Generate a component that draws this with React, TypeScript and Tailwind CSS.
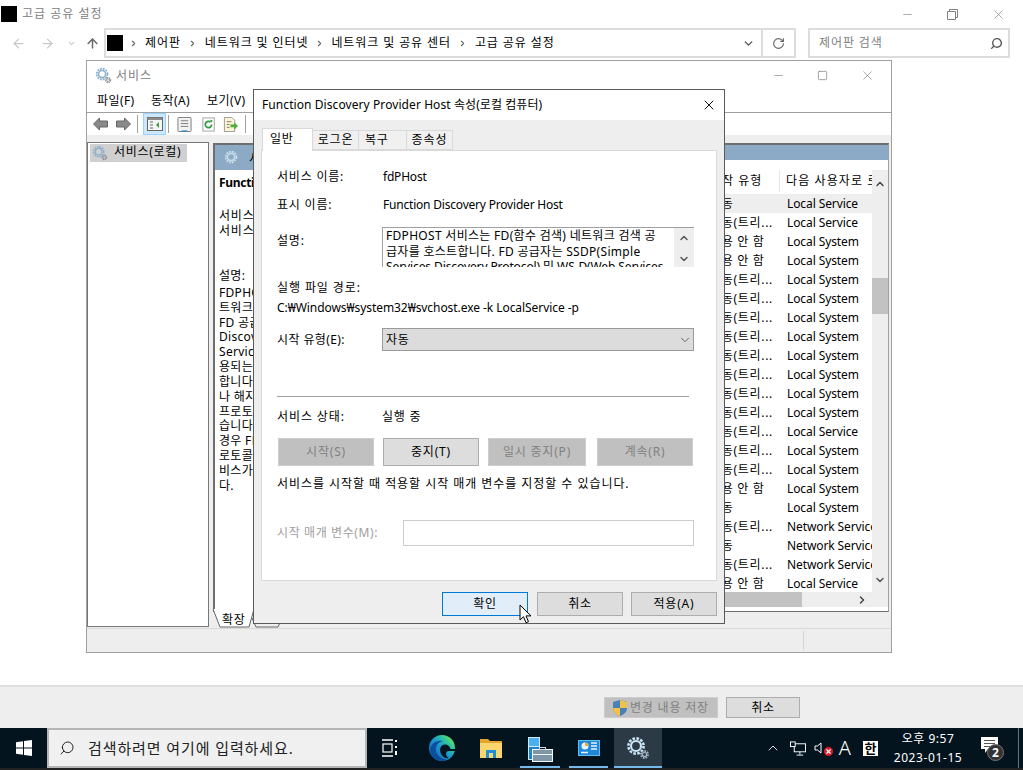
import { ArrowLeft, ArrowRight, ArrowUp, ChevronDown, ChevronRight, ChevronUp, Minus, RotateCw, Search, Square, X } from 'lucide-react'

const rows = [
  ['자동', 'Local Service'],
  ['자동(트리...', 'Local Service'],
  ['사용 안 함', 'Local System'],
  ['사용 안 함', 'Local System'],
  ['자동(트리...', 'Local System'],
  ['자동(트리...', 'Local System'],
  ['자동(트리...', 'Local System'],
  ['자동(트리...', 'Local System'],
  ['자동(트리...', 'Local System'],
  ['자동(트리...', 'Local System'],
  ['자동(트리...', 'Local System'],
  ['자동(트리...', 'Local System'],
  ['자동(트리...', 'Local Service'],
  ['자동(트리...', 'Local System'],
  ['자동(트리...', 'Local System'],
  ['사용 안 함', 'Local System'],
  ['자동', 'Local System'],
  ['자동(트리...', 'Network Service'],
  ['자동', 'Network Service'],
  ['자동(트리...', 'Network Service'],
  ['사용 안 함', 'Local Service'],
]

const descLines = ['설명:', 'FDPHOST 서비스는', '트워크 검색 공급자', 'FD 공급자는 SSDP', 'Discovery Protocol', 'Services Discovery', '용되는 네트워크', '합니다. 서비스를', '나 해지하면 이', '프로토콜을 사용', '습니다. 사용 안 함', '경우 FD 공급자', '로토콜을 사용하는', '비스가 시작되지', '다.']

function Gear({ className, color = '#8fb2cc', small = '#8a8f96' }: { className?: string; color?: string; small?: string }) {
  return (
    <svg viewBox="0 0 24 24" className={className} fill="none">
      <circle cx="10" cy="10" r="7.6" stroke={color} strokeWidth="2.6" strokeDasharray="2.6 1.4" />
      <circle cx="10" cy="10" r="5" stroke={color} strokeWidth="2.2" />
      <circle cx="18.5" cy="18.5" r="3.4" stroke={small} strokeWidth="2" strokeDasharray="1.6 1" />
      <circle cx="18.5" cy="18.5" r="2" stroke={small} strokeWidth="1.2" />
    </svg>
  )
}

function Btn({ label, w, kind = 'normal' }: { label: string; w: string; kind?: 'normal' | 'off' | 'focus' }) {
  const look =
    kind === 'off'
      ? 'bg-[#c0c0c0] border-[#cccccc] text-[#808080]'
      : kind === 'focus'
        ? 'bg-[#e1eefa] border-[#0078d7] text-black'
        : 'bg-[#dddddd] border-[#adadad] text-black'
  return <div className={`${w} h-full border flex items-center justify-center tracking-[0.8px] ${look}`}>{label}</div>
}

function FormRow({ label, value, className }: { label: string; value: string; className?: string }) {
  return (
    <div className={`flex items-center h-[18px] ${className}`}>
      <span className="w-[106px] tracking-[0.8px]">{label}</span>
      <span className="tracking-[-0.2px]">{value}</span>
    </div>
  )
}

function Dialog() {
  return (
    <div className="absolute left-[253px] top-[89px] w-[472px] h-[535px] border border-[#5a5a5a] bg-[#eeeeee] flex flex-col z-20">
      <div className="h-[30px] bg-white flex items-center justify-between pl-[8px] pr-[7px] shrink-0">
        <span className="tracking-[0.08px]">Function Discovery Provider Host 속성(로컬 컴퓨터)</span>
        <X className="w-[16px] h-[16px] text-black" strokeWidth={1.4} />
      </div>
      <div className="flex items-end h-[30px] pl-[8px] shrink-0 relative z-10">
        <div className="w-[51px] h-[23px] bg-white border border-b-0 border-[#d9d9d9] flex items-center pl-[7px] pb-[3px] tracking-[0.8px] -mb-px">일반</div>
        <div className="w-[46px] h-[20px] bg-[#f0f0f0] border border-l-0 border-[#d9d9d9] flex items-center justify-center tracking-[0.8px]">로그온</div>
        <div className="w-[48px] h-[20px] bg-[#f0f0f0] border border-l-0 border-[#d9d9d9] flex items-center pl-[6px] tracking-[0.8px]">복구</div>
        <div className="w-[46px] h-[20px] bg-[#f0f0f0] border border-l-0 border-[#d9d9d9] flex items-center justify-center tracking-[0.9px]">종속성</div>
      </div>
      <div className="mx-[7px] h-[431px] bg-white border border-[#d9d9d9] px-[15px] pt-[17px] flex flex-col shrink-0">
        <FormRow label="서비스 이름:" value="fdPHost" />
        <FormRow label="표시 이름:" value="Function Discovery Provider Host" className="mt-[10px]" />
        <div className="flex mt-[13px]">
          <span className="w-[105px] tracking-[0.8px] mt-[5px]">설명:</span>
          <div className="w-[312px] h-[40px] border-t border-l border-[#a0a0a0] flex overflow-hidden">
            <div className="flex-1 pl-[3px] leading-[15.7px] overflow-hidden tracking-[0.3px] whitespace-nowrap">
              <div>FDPHOST 서비스는 FD(함수 검색) 네트워크 검색 공</div>
              <div>급자를 호스트합니다. FD 공급자는 SSDP(Simple</div>
              <div className="tracking-[-0.1px]">Services Discovery Protocol) 및 WS-D(Web Services</div>
            </div>
            <div className="w-[20px] bg-[#eeeeee] flex flex-col items-center justify-between shrink-0 pt-[4px] pb-[2px]">
              <ChevronUp className="w-[12px] h-[12px] text-[#555]" strokeWidth={3} />
              <ChevronDown className="w-[12px] h-[12px] text-[#555]" strokeWidth={3} />
            </div>
          </div>
        </div>
        <div className="mt-[12px] h-[18px] tracking-[0.9px] flex items-center">실행 파일 경로:</div>
        <div className="mt-[2px] h-[18px] flex items-center tracking-[-0.06px]">C:₩Windows₩system32₩svchost.exe -k LocalService -p</div>
        <div className="flex items-center mt-[11px]">
          <span className="w-[105px] tracking-[0.4px]">시작 유형(E):</span>
          <div className="w-[312px] h-[23px] bg-[#dcdcdc] border border-[#9a9a9a] flex items-center justify-between pl-[3px] pr-[1px] tracking-[0.8px]">
            자동
            <ChevronDown className="w-[14px] h-[14px] text-[#555]" strokeWidth={1.5} />
          </div>
        </div>
        <div className="mt-[45px] h-px bg-[#a0a0a0] w-[412px] shrink-0" />
        <div className="mt-[11px] h-[18px] flex items-center">
          <span className="w-[105px] tracking-[0.9px]">서비스 상태:</span>
          <span className="tracking-[0.8px]">실행 중</span>
        </div>
        <div className="flex h-[28px] mt-[12px] pl-px">
          <Btn label="시작(S)" w="w-[96px]" kind="off" />
          <Btn label="중지(T)" w="w-[96px] ml-[9px]" />
          <Btn label="일시 중지(P)" w="w-[98px] ml-[9px]" kind="off" />
          <Btn label="계속(R)" w="w-[96px] ml-[11px]" kind="off" />
        </div>
        <div className="mt-[9px] h-[18px] flex items-center tracking-[0.95px]">서비스를 시작할 때 적용할 시작 매개 변수를 지정할 수 있습니다.</div>
        <div className="flex items-center mt-[27px] text-[#a0a0a0]">
          <span className="w-[126px] tracking-[0.6px]">시작 매개 변수(M):</span>
          <div className="w-[291px] h-[26px] bg-white border border-[#cccccc]" />
        </div>
      </div>
      <div className="flex justify-end pr-[7px] mt-[11px] h-[24px] text-black">
        <Btn label="확인" w="w-[86px]" kind="focus" />
        <Btn label="취소" w="w-[86px] ml-[9px]" />
        <Btn label="적용(A)" w="w-[86px] ml-[8px]" />
      </div>
    </div>
  )
}

function ToolIcons() {
  return (
    <div className="h-[22px] flex items-center pl-[5px] bg-white shrink-0">
      <svg viewBox="0 0 16 14" className="w-[17px] h-[14px]"><path d="M1 7l6-6v3h8v6H7v3z" fill="#8a8a8a" stroke="#666" /></svg>
      <svg viewBox="0 0 16 14" className="w-[17px] h-[14px] ml-[6px]"><path d="M15 7L9 1v3H1v6h8v3z" fill="#8a8a8a" stroke="#666" /></svg>
      <div className="w-px h-[18px] bg-[#a0a0a0] ml-[5px]" />
      <div className="w-[23px] h-[22px] bg-[#cce8ff] border border-[#99d1ff] ml-[5px] flex items-center justify-center">
        <svg viewBox="0 0 16 14" className="w-[16px] h-[14px]">
          <rect x="0.5" y="0.5" width="15" height="13" fill="#f5f5f5" stroke="#666" />
          <rect x="0.5" y="0.5" width="15" height="2.5" fill="#8a8a8a" />
          <path d="M3 5h3M3 8h3M3 11h3" stroke="#666" />
          <path d="M12 5v6l-3-3z" fill="#3a9a4a" />
        </svg>
      </div>
      <div className="w-px h-[18px] bg-[#a0a0a0] ml-[2px]" />
      <svg viewBox="0 0 16 16" className="w-[15px] h-[15px] ml-[8px]">
        <rect x="1" y="0.5" width="14" height="15" rx="1" fill="#f3f3f3" stroke="#777" />
        <path d="M4 4h8M4 7h8M4 10h8" stroke="#777" />
        <path d="M5 15h6" stroke="#2a8fd0" strokeWidth="1.5" />
      </svg>
      <svg viewBox="0 0 16 16" className="w-[14px] h-[15px] ml-[10px]">
        <rect x="1" y="0.5" width="13" height="15" fill="#fff" stroke="#999" />
        <path d="M11 8a3.6 3.6 0 1 1-1.2-2.7" fill="none" stroke="#2f9a3f" strokeWidth="2" />
        <path d="M9 2.5l3 .5-.8 3z" fill="#2f9a3f" />
      </svg>
      <svg viewBox="0 0 16 16" className="w-[15px] h-[15px] ml-[7px]">
        <path d="M1.5 .5h8l3 3v12h-11z" fill="#fbf3d4" stroke="#999" />
        <path d="M4 5h5M4 8h3M4 11h3" stroke="#777" />
        <path d="M8 8h4V5.500l4 4-4 4V11H8z" fill="#4fae3c" />
      </svg>
      <div className="w-px h-[18px] bg-[#a0a0a0] ml-[7px]" />
    </div>
  )
}

function ServicesWindow() {
  return (
    <div className="absolute left-[86px] top-[60px] w-[806px] h-[593px] border border-[#a0a0a0] bg-white flex flex-col z-10">
      <div className="h-[29px] flex items-center pl-[8px] shrink-0">
        <Gear className="w-[17px] h-[17px]" />
        <span className="ml-[4px] text-[#808080] tracking-[1px]">서비스</span>
        <div className="ml-auto flex items-center text-[#808080]">
          <Minus className="w-[13px] h-[13px]" strokeWidth={1.2} />
          <Square className="w-[11px] h-[11px] ml-[32px]" strokeWidth={1.6} />
          <X className="w-[15px] h-[15px] ml-[32px] mr-[16px]" strokeWidth={1.1} />
        </div>
      </div>
      <div className="h-[23px] flex items-center pl-[10px] border-b border-[#a0a0a0] shrink-0 tracking-[0.4px]">
        <span className="w-[54px]">파일(F)</span>
        <span className="w-[56px]">동작(A)</span>
        <span>보기(V)</span>
      </div>
      <ToolIcons />
      <div className="h-[7px] bg-[#eeeeee] shrink-0" />
      <div className="flex h-[486px] shrink-0 bg-[#eeeeee]">
        <div className="w-[122px] h-[485px] bg-white border border-[#777777] pt-px pl-[2px] shrink-0">
          <div className="w-[97px] h-[18px] bg-[#d0d0d0] flex items-center pl-[2px]">
            <Gear className="w-[16px] h-[16px]" />
            <span className="ml-[6px] -mt-[3px] tracking-[0.7px]">서비스(로컬)</span>
          </div>
        </div>
        <div className="ml-[4px] w-[676px] flex flex-col relative">
          <div className="mt-px h-[469px] bg-white border-t-2 border-l-2 border-[#6e6e6e] border-b border-r border-r-[#a0a0a0] flex">
            <div className="flex-1 min-w-0 overflow-hidden whitespace-nowrap">
              <div className="h-[25px] bg-[#8ca9c5] flex items-center pl-[9px] pt-[2px]">
                <Gear className="w-[17px] h-[17px]" color="#c9dcec" small="#8fa5b8" />
                <span className="ml-[8px]">서비스(로컬)</span>
              </div>
              <div className="pl-[4px] pt-[3px]">
                <div className="font-bold h-[20px] flex items-center tracking-[-0.3px]">Function Discovery Provider Host</div>
                <div className="mt-[15px] leading-[15px] tracking-[0.8px]">
                  <div>서비스 중지</div>
                  <div>서비스 다시 시작</div>
                </div>
                <div className="mt-[31px] leading-[14.85px] tracking-[0.3px]">
                  {descLines.map((line) => (
                    <div key={line} className={line === '설명:' ? 'mb-[2px]' : ''}>{line}</div>
                  ))}
                </div>
              </div>
            </div>
            <div className="w-[178px] shrink-0 flex flex-col">
              <div className="h-[15px] bg-[#8ca9c5] shrink-0" />
              <div className="flex flex-1 min-h-0">
                <div className="flex-1 min-w-0 overflow-hidden">
                  <div className="h-[34px] pt-[12px] flex">
                    <span className="w-[69px] shrink-0 tracking-[1px] whitespace-nowrap">시작 유형</span>
                    <div className="w-px h-[22px] -mt-[2px] bg-[#e5e5e5] shrink-0" />
                    <span className="pl-[6px] tracking-[1.1px] whitespace-nowrap overflow-hidden">다음 사용자로 로그온</span>
                  </div>
                  {rows.map((row, i) => (
                    <div key={i} className={`flex h-[19px] items-center ${i === 0 ? 'bg-[#eeeeee]' : ''}`}>
                      <span className="w-[77px] shrink-0 tracking-[0.7px] whitespace-nowrap overflow-hidden">{row[0]}</span>
                      <span className="whitespace-nowrap overflow-hidden tracking-[-0.1px]">{row[1]}</span>
                    </div>
                  ))}
                </div>
                <div className="w-[16px] bg-[#eeeeee] shrink-0 flex flex-col items-center pt-[8px] pb-[6px] mt-[10px]">
                  <ChevronUp className="w-[12px] h-[12px] text-[#444]" strokeWidth={3} />
                  <div className="w-full h-[36px] bg-[#c2c2c2] mt-[88px]" />
                  <ChevronDown className="w-[12px] h-[12px] text-[#555] mt-auto" strokeWidth={3} />
                </div>
              </div>
              <div className="h-[15px] bg-[#eeeeee] flex items-center justify-between shrink-0 mb-[4px]">
                <div className="w-[92px] h-full bg-[#c2c2c2]" />
                <ChevronRight className="w-[12px] h-[12px] text-[#444] mr-[20px]" strokeWidth={3} />
              </div>
            </div>
          </div>
          <div className="absolute left-[-1px] top-[466px] z-10 w-[44px] h-[20px]">
            <svg viewBox="0 0 44 20" className="absolute inset-0 w-[44px] h-[20px]" fill="#fff" stroke="#666">
              <path d="M1 1l7 18h29l5-18" />
            </svg>
            <span className="absolute left-[10px] top-[3px] tracking-[0.6px]">확장</span>
          </div>
          <svg viewBox="0 0 32 10" className="absolute left-[38px] top-[476px] w-[32px] h-[10px]" fill="#eee" stroke="#666">
            <path d="M1 0l4 9h22l4-9" />
          </svg>
        </div>
      </div>
      <div className="flex-1 bg-[#eeeeee] border-t border-[#d9d9d9] flex justify-end">
        <div className="w-[88px] my-[2px] border-l border-[#d5d5d5]" />
      </div>
    </div>
  )
}

function Cursor() {
  return (
    <svg viewBox="0 0 13 20" className="absolute left-[519px] top-[604px] w-[13px] h-[20px] z-30">
      <path d="M1 1v15l3.500-3.300 2.500 6 2.500-1-2.500-5.800H12z" fill="#fff" stroke="#000" strokeWidth="1" />
    </svg>
  )
}

function EdgeIcon() {
  return (
    <svg viewBox="0 0 26 26" className="w-[26px] h-[26px]">
      <defs>
        <linearGradient id="edgeGrad" x1="0.1" y1="1" x2="0.95" y2="0.2">
          <stop offset="0" stopColor="#0f62b0" />
          <stop offset="0.5" stopColor="#1a93d2" />
          <stop offset="0.8" stopColor="#2fc6a0" />
          <stop offset="1" stopColor="#6ade5c" />
        </linearGradient>
      </defs>
      <circle cx="13" cy="13" r="13" fill="url(#edgeGrad)" />
      <path d="M1 14C3 7 9 5 14 6c-5 1-8 5-7 10 1 5 6 8 11 8.500-2 1-3.500 1.500-5 1.500C6 26 1 21 1 14z" fill="#0b4f9c" />
      <path d="M11 14c.5-3 3-5 6-4.500 2 .3 4 2 4.500 4.500H26v2h-6c-2 0-3 1-3 3 0 1.500 1 3 3 4-5 1-9-3-9-9z" fill="#061620" />
    </svg>
  )
}

function TaskIcons() {
  return (
    <div className="flex items-center h-full">
      <svg viewBox="0 0 16 18" className="w-[16px] h-[18px] ml-[15px] text-white" fill="none" stroke="currentColor" strokeWidth="1.200">
        <path d="M0 1h11M0 17h11" strokeWidth="1.600" />
        <rect x="1" y="5" width="9" height="8" />
        <path d="M14 1v2M14 7v2M14 12v4" strokeWidth="2" />
      </svg>
      <div className="ml-[31px]"><EdgeIcon /></div>
      <svg viewBox="0 0 22 19" className="w-[22px] h-[19px] ml-[25px]">
        <path d="M0 0h8l2 2h12v17H0z" fill="#e2a52e" />
        <path d="M0 4h22v15H0z" fill="#fbd56e" />
        <path d="M6 11h10v8H6z" fill="#1d8fd8" />
        <path d="M9 14h4v5H9z" fill="#fbd56e" />
      </svg>
      <div className="w-[40px] h-full ml-[18px] relative flex items-center">
        <svg viewBox="0 0 25 25" className="w-[25px] h-[25px] ml-[8px] mt-[2px]">
          <rect x="0.500" y="0.500" width="11" height="9" fill="#4ab0ee" stroke="#cfeaf9" />
          <rect x="0.500" y="9.500" width="11" height="13" fill="#1e82cc" stroke="#cfeaf9" />
          <rect x="4.500" y="12.500" width="20" height="12" fill="#7d97a8" stroke="#f2f6f8" />
          <path d="M5 17.500h19" stroke="#f2f6f8" />
          <rect x="11.500" y="10.500" width="6" height="2" fill="none" stroke="#cfd8de" />
        </svg>
        <div className="absolute bottom-0 inset-x-0 h-[2px] bg-[#76b9ed]" />
      </div>
      <div className="w-[39px] h-full ml-[9px] relative flex items-center justify-center">
        <svg viewBox="0 0 22 16" className="w-[22px] h-[16px]">
          <rect x="0" y="0" width="22" height="16" fill="#1f86d8" />
          <rect x="0.500" y="0.500" width="21" height="15" fill="none" stroke="#5cc0ee" />
          <circle cx="7" cy="6" r="3.500" fill="#e8f6ff" />
          <path d="M7 6V2.500A3.500 3.500 0 0 1 10.500 6z" fill="#f0a83c" />
          <path d="M13 3h6M13 6h6M13 9h6M3 12.500h7" stroke="#e8f5ff" strokeWidth="1.300" />
        </svg>
        <div className="absolute bottom-0 inset-x-0 h-[2px] bg-[#76b9ed]" />
      </div>
      <div className="w-[48px] h-full ml-[6px] bg-[#2c3a46] relative flex items-center pl-[12px]">
        <Gear className="w-[24px] h-[24px]" color="#c8e4f5" small="#a6b8c6" />
        <div className="absolute bottom-0 inset-x-0 h-[2px] bg-[#76b9ed]" />
      </div>
    </div>
  )
}

function Tray() {
  return (
    <div className="ml-auto flex items-center h-full text-white">
      <ChevronUp className="w-[16px] h-[16px]" strokeWidth={1.300} />
      <svg viewBox="0 0 17 15" className="w-[16px] h-[15px] ml-[9px]" fill="none" stroke="#fff">
        <rect x="4.500" y="2.500" width="12" height="8.500" />
        <rect x="0.500" y="0.500" width="5" height="5" fill="#061620" />
        <path d="M10.500 11v3M7 14.500h7" />
      </svg>
      <div className="relative w-[16px] h-[16px] ml-[8px]">
        <svg viewBox="0 0 16 16" className="w-[16px] h-[16px]" fill="none" stroke="#fff">
          <path d="M1 6v4h2.500L7 13V3L3.500 6z" />
        </svg>
        <div className="absolute right-[-3px] bottom-0 w-[9px] h-[9px] rounded-full bg-[#d81e2c] flex items-center justify-center">
          <X className="w-[7px] h-[7px] text-white" strokeWidth={4} />
        </div>
      </div>
      <span className="ml-[9px] text-[20px] leading-none font-light">A</span>
      <div className="ml-[12px] w-[15px] h-[15px] bg-white text-black text-[13px] font-bold leading-none flex items-center justify-center">한</div>
      <div className="w-[76px] ml-[12px] flex flex-col items-center text-[12px] leading-[19px]">
        <span className="tracking-[0.5px]">오후 9:57</span>
        <span className="tracking-[0.6px]">2023-01-15</span>
      </div>
      <div className="relative ml-[15px] w-[24px] h-[24px]">
        <svg viewBox="0 0 17 17" className="absolute left-0 top-[1px] w-[17px] h-[17px]">
          <path d="M0 0h17v12H7l-3 4v-4H0z" fill="#fff" />
          <path d="M3 3.500h11M3 6.500h11M3 9.500h7" stroke="#555" />
        </svg>
        <div className="absolute left-[6px] top-[8px] w-[17px] h-[17px] rounded-full bg-[#333] border border-[#777] text-[12px] font-bold flex items-center justify-center">2</div>
      </div>
      <div className="w-px h-[40px] bg-[#6a7278] ml-[13px] mr-[4px]" />
    </div>
  )
}

export default function App() {
  return (
    <div className="relative w-[1023px] h-[770px] overflow-hidden bg-white flex flex-col text-[12px] text-black font-['Noto_Sans','Noto_Sans_CJK_KR',sans-serif]">
      <div className="h-[28px] flex items-center pl-[1px] shrink-0">
        <div className="w-[16px] h-[16px] bg-black" />
        <span className="ml-[5px] text-[#808080] tracking-[1px]">고급 공유 설정</span>
        <div className="ml-auto flex items-center text-[#808080]">
          <Minus className="w-[13px] h-[13px]" strokeWidth={1.2} />
          <svg viewBox="0 0 11 11" className="w-[11px] h-[11px] ml-[33px]" fill="none" stroke="currentColor"><path d="M2.500 2.500V.5h8v8h-2M.5 2.500h8v8h-8z" /></svg>
          <X className="w-[15px] h-[15px] ml-[33px] mr-[17px]" strokeWidth={1.1} />
        </div>
      </div>
      <div className="h-[30px] flex items-center shrink-0 pl-[11px]">
        <ArrowLeft className="w-[15px] h-[15px] text-[#c8c8c8]" strokeWidth={2} />
        <ArrowRight className="w-[15px] h-[15px] text-[#c8c8c8] ml-[14px]" strokeWidth={2} />
        <ChevronDown className="w-[9px] h-[9px] text-[#c8c8c8] ml-[12px]" strokeWidth={3} />
        <ArrowUp className="w-[15px] h-[15px] text-[#6a6a6a] ml-[9px]" strokeWidth={2.4} />
        <div className="ml-[4px] w-[692px] h-[30px] border-2 border-[#dcdcdc] flex items-center">
          <div className="w-[16px] h-[16px] bg-black ml-[1px]" />
          <ChevronRight className="w-[9px] h-[9px] text-[#666] ml-[6px]" strokeWidth={3} />
          <span className="ml-[7px] tracking-[0.9px]">제어판</span>
          <ChevronRight className="w-[9px] h-[9px] text-[#666] ml-[7px]" strokeWidth={3} />
          <span className="ml-[8px] tracking-[0.9px]">네트워크 및 인터넷</span>
          <ChevronRight className="w-[9px] h-[9px] text-[#666] ml-[7px]" strokeWidth={3} />
          <span className="ml-[7px] tracking-[0.9px]">네트워크 및 공유 센터</span>
          <ChevronRight className="w-[9px] h-[9px] text-[#666] ml-[7px]" strokeWidth={3} />
          <span className="ml-[8px] tracking-[0.9px]">고급 공유 설정</span>
          <ChevronDown className="w-[13px] h-[13px] text-[#555] ml-auto mr-[6px]" strokeWidth={2.6} />
          <div className="w-[33px] h-full border-l-2 border-[#dcdcdc] flex items-center justify-center">
            <RotateCw className="w-[13px] h-[13px] text-[#666]" strokeWidth={2} />
          </div>
        </div>
        <div className="ml-[12px] w-[202px] h-[30px] border-2 border-[#dcdcdc] flex items-center pl-[9px] pr-[5px] text-[#808080] tracking-[0.9px]">
          제어판 검색
          <Search className="w-[13px] h-[13px] text-[#555] ml-auto -scale-x-100" strokeWidth={2.6} />
        </div>
      </div>
      <div className="flex-1 bg-white" />
      <div className="h-[43px] bg-[#eeeeee] border-t-2 border-[#dfdfdf] flex items-center shrink-0 pl-[604px]">
        <div className="w-[114px] h-[21px] bg-[#c0c0c0] border border-[#cccccc] text-[#808080] flex items-center pl-[8px] tracking-[0.8px]">
          <svg viewBox="0 0 14 16" className="w-[14px] h-[16px] shrink-0">
            <path d="M7 0l7 2v6c0 4-3 6.500-7 8-4-1.500-7-4-7-8V2z" fill="#4a7fb8" />
            <path d="M7 0l7 2v6H7zM7 8v8c-4-1.500-7-4-7-8z" fill="#f2c14a" />
          </svg>
          <span className="whitespace-nowrap ml-[3px]">변경 내용 저장</span>
        </div>
        <div className="w-[74px] h-[21px] ml-[8px] bg-[#dddddd] border border-[#adadad] flex items-center justify-center tracking-[0.8px]">취소</div>
      </div>
      <div className="h-[40px] bg-[#04141f] flex items-center shrink-0 text-white">
        <div className="w-[47px] h-full flex items-center justify-center">
          <svg viewBox="0 0 16 16" className="w-[16px] h-[16px]" fill="#fff">
            <path d="M0 2.300l7-1v6.200H0zM8 1.100L16 0v7.500H8zM0 8.500h7v6.200l-7-1zM8 8.500h8V16l-8-1.100z" />
          </svg>
        </div>
        <div className="w-[320px] h-full bg-[#f0f0f0] border-2 border-[#b5b5b5] flex items-center pl-[10px] text-[#222] text-[15px]">
          <Search className="w-[16px] h-[16px] text-[#222] -scale-x-100" strokeWidth={1.5} />
          <span className="ml-[13px] tracking-[0.9px] whitespace-nowrap">검색하려면 여기에 입력하세요.</span>
        </div>
        <TaskIcons />
        <Tray />
      </div>
      <div className="h-[2px] bg-[#222222] shrink-0" />
      <ServicesWindow />
      <Dialog />
      <Cursor />
    </div>
  )
}
